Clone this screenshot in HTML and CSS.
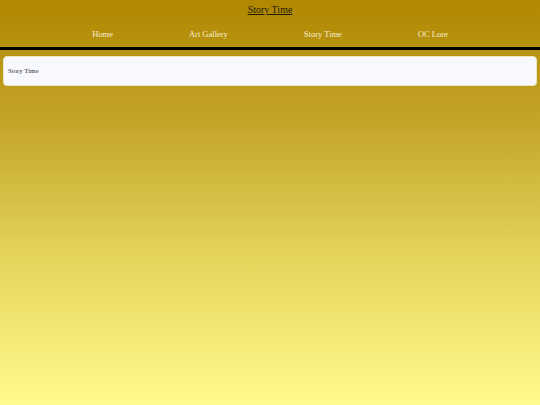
FILE: index.html
```html
<!DOCTYPE html>
<html lang="en">
<head>
<meta charset="utf-8">
<title>Story Time</title>
<link rel="stylesheet" href="styles.css">
</head>
<body>
<header class="site-header">
  <h1 class="site-title"><a href="#">Story Time</a></h1>
  <nav class="site-nav">
    <a href="#">Home</a>
    <a href="#">Art Gallery</a>
    <a href="#">Story Time</a>
    <a href="#">OC Lore</a>
  </nav>
</header>
<main class="content">
  <section class="card">Story Time</section>
</main>
</body>
</html>
```
FILE: styles.css
```css
html, body {
  margin: 0;
  padding: 0;
}
body {
  min-height: 405px;
  background: linear-gradient(to bottom, #b08700 0%, #c4a52a 30%, #e6d65e 65%, #fffb8c 100%);
  font-family: "Liberation Serif", "Times New Roman", serif;
}
.site-header {
  padding-top: 4px;
  border-bottom: 3px solid #000;
}
.site-title {
  margin: 0;
  font-size: 10px;
  line-height: 12px;
  font-weight: normal;
  text-align: center;
}
.site-title a {
  color: #1f1a05;
  text-decoration: underline;
}
.site-nav {
  display: flex;
  justify-content: center;
  gap: 76px;
  margin-top: 13px;
  padding-bottom: 8px;
  font-size: 8.5px;
  line-height: 10px;
}
.site-nav a {
  color: #f6efcf;
  text-decoration: none;
}
.content {
  padding: 6px 3px 0;
}
.card {
  height: 30px;
  box-sizing: border-box;
  display: flex;
  align-items: center;
  padding: 0 0 2px 4px;
  background: #f8f8ff;
  border: 1px solid #ece6c4;
  border-radius: 4px;
  color: #333;
  font-size: 6.8px;
}
```
